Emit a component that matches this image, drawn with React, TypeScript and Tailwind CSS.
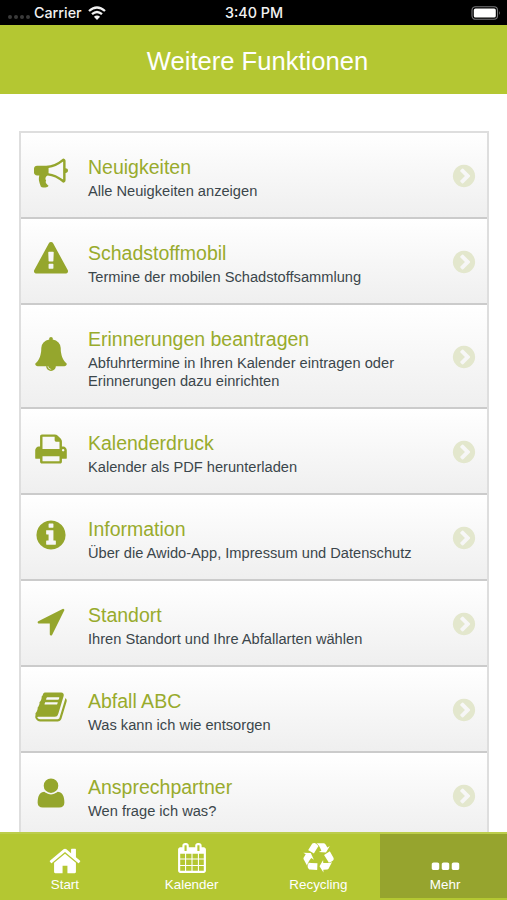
const CIRCLE =
  "M1664 896q0 209-103 385.5t-279.5 279.5-385.5 103-385.5-103-279.5-279.5-103-385.5 103-385.5 279.5-279.5 385.5-103 385.5 103 279.5 279.5 103 385.5z";

const icons = {
  bullhorn:
    "M1664 640q53 0 90.5 37.5t37.5 90.5-37.5 90.5-90.5 37.5v384q0 52-38 90t-90 38q-417-347-812-380-58 19-91 66t-31 100.5 40 92.5q-20 33-23 65.5t6 58 33.5 55 48 50 61.5 50.5q-29 58-111.5 83t-168.5 11.5-132-55.5q-7-23-29.5-87.5t-32-94.5-23-89-15-101 3.5-98.5 22-110.5h-122q-66 0-113-47t-47-113v-192q0-66 47-113t113-47h480q435 0 896-384 52 0 90 38t38 90v384zm-128 604v-954q-394 302-768 343v270q377 42 768 341z",
  warning:
    "M1024 1375v-190q0-14-9.5-23.5t-22.5-9.5h-192q-13 0-22.5 9.5t-9.5 23.5v190q0 14 9.5 23.5t22.5 9.5h192q13 0 22.5-9.5t9.5-23.5zm-2-374l18-459q0-12-10-19-13-11-24-11h-220q-11 0-24 11-10 7-10 21l17 457q0 10 10 16.5t24 6.5h185q14 0 23.5-6.5t10.5-16.5zm-14-934l768 1408q35 63-2 126-17 29-46.5 46t-63.5 17h-1536q-34 0-63.5-17t-46.5-46q-37-63-2-126l768-1408q17-31 47-49t65-18 65 18 47 49z",
  bell:
    "M912 1696q0-16-16-16-59 0-101.5-42.5t-42.5-101.5q0-16-16-16t-16 16q0 73 51.5 124.5t124.5 51.5q16 0 16-16zm816-288q0 52-38 90t-90 38h-448q0 106-75 181t-181 75-181-75-75-181h-448q-52 0-90-38t-38-90q50-42 91-88t85-119.5 74.5-158.5 50-206 19.5-260q0-152 117-282.5t307-158.5q-8-19-8-39 0-40 28-68t68-28 68 28 28 68q0 20-8 39 190 28 307 158.5t117 282.5q0 139 19.5 260t50 206 74.5 158.5 85 119.5 91 88z",
  print:
    "M448 1536h896v-256h-896v256zm0-640h896v-384h-160q-40 0-68-28t-28-68v-160h-640v640zm1152 64q0-26-19-45t-45-19-45 19-19 45 19 45 45 19 45-19 19-45zm128 0v416q0 13-9.5 22.5t-22.5 9.5h-224v160q0 40-28 68t-68 28h-960q-40 0-68-28t-28-68v-160h-224q-13 0-22.5-9.5t-9.5-22.5v-416q0-79 56.5-135.5t135.5-56.5h64v-544q0-40 28-68t68-28h672q40 0 88 20t76 48l152 152q28 28 48 76t20 88v256h64q79 0 135.5 56.5t56.5 135.5z",
  info:
    "M1152 1376v-160q0-14-9-23t-23-9h-96v-512q0-14-9-23t-23-9h-320q-14 0-23 9t-9 23v160q0 14 9 23t23 9h96v320h-96q-14 0-23 9t-9 23v160q0 14 9 23t23 9h448q14 0 23-9t9-23zm-128-896v-160q0-14-9-23t-23-9h-192q-14 0-23 9t-9 23v160q0 14 9 23t23 9h192q14 0 23-9t9-23z" +
    CIRCLE,
  arrow:
    "M1593 349l-640 1280q-17 35-57 35-5 0-15-2-22-5-35.5-22.5t-13.5-39.5v-576h-576q-22 0-39.5-13.5t-22.5-35.5 4-42 29-30l1280-640q13-7 29-7 27 0 45 19 15 14 18.5 34.5t-6.5 39.5z",
  book:
    "M1703 478q40 57 18 129l-275 906q-19 64-76.5 107.5t-122.5 43.5h-923q-77 0-148.5-53.5t-99.5-131.5q-24-67-2-127 0-4 3-27t4-37q1-8-3-21.5t-3-19.5q2-11 8-21t16.5-23.5 16.5-23.5q23-38 45-91.5t30-91.5q3-10 .5-30t-.5-28q3-11 17-28t17-23q21-36 42-92t25-90q1-9-2.5-32t.5-28q4-13 22-30.5t22-22.5q19-26 42.5-84.5t27.5-96.5q1-8-3-25.5t-2-26.5q2-8 9-18t18-23 17-21q8-12 16.5-30.5t15-35 16-36 19.5-32 26.5-23.5 36-11.5 47.5 5.5l-1 3q38-9 51-9h761q74 0 114 56t18 130l-274 906q-36 119-71.5 153.5t-128.5 34.5h-869q-27 0-38 15-11 16-1 43 24 70 144 70h923q29 0 56-15.5t35-41.5l300-987q7-22 5-57 38 15 59 43zm-1064 2q-4 13 2 22.5t20 9.5h608q13 0 25.5-9.5t16.5-22.5l21-64q4-13-2-22.5t-20-9.5h-608q-13 0-25.5 9.5t-16.5 22.5zm-83 256q-4 13 2 22.5t20 9.5h608q13 0 25.5-9.5t16.5-22.5l21-64q4-13-2-22.5t-20-9.5h-608q-13 0-25.5 9.5t-16.5 22.5z",
  user:
    "M1600 1405q0 120-73 189.5t-194 69.5h-874q-121 0-194-69.5t-73-189.5q0-53 3.5-103.5t14-109 26.5-108.5 43-97.5 62-81 85.5-53.5 111.5-20q9 0 42 21.5t74.5 48 108 48 133.5 21.5 133.5-21.5 108-48 74.5-48 42-21.5q61 0 111.5 20t85.5 53.5 62 81 43 97.5 26.5 108.5 14 109 3.5 103.5zm-320-893q0 159-112.5 271.5t-271.5 112.5-271.5-112.5-112.5-271.5 112.5-271.5 271.5-112.5 271.5 112.5 112.5 271.5z",
  chevron:
    "M845 1395l454-454q19-19 19-45t-19-45l-454-454q-19-19-45-19t-45 19l-102 102q-19 19-19 45t19 45l307 307-307 307q-19 19-19 45t19 45l102 102q19 19 45 19t45-19z" +
    CIRCLE,
  home:
    "M1472 992v480q0 26-19 45t-45 19h-384v-384h-256v384h-384q-26 0-45-19t-19-45v-480q0-1 .5-3t.5-3l575-474 575 474q1 2 1 6zm223-69l-62 74q-8 9-21 11h-3q-13 0-21-7l-692-577-692 577q-12 8-24 7-13-2-21-11l-62-74q-8-10-7-23.5t11-21.5l719-599q32-26 76-26t76 26l244 204v-195q0-14 9-23t23-9h192q14 0 23 9t9 23v408l219 182q10 8 11 21.5t-7 23.5z",
  calendar:
    "M192 1664h288v-288h-288v288zm352 0h320v-288h-320v288zm-352-352h288v-320h-288v320zm352 0h320v-320h-320v320zm-352-384h288v-288h-288v288zm736 736h320v-288h-320v288zm-384-736h320v-288h-320v288zm768 736h288v-288h-288v288zm-384-352h320v-320h-320v320zm-352-864v-288q0-13-9.5-22.5t-22.5-9.5h-64q-13 0-22.5 9.5t-9.5 22.5v288q0 13 9.5 22.5t22.5 9.5h64q13 0 22.5-9.5t9.5-22.5zm736 864h288v-320h-288v320zm-384-384h320v-288h-320v288zm384 0h288v-288h-288v288zm32-480v-288q0-13-9.5-22.5t-22.5-9.5h-64q-13 0-22.5 9.5t-9.5 22.5v288q0 13 9.5 22.5t22.5 9.5h64q13 0 22.5-9.5t9.5-22.5zm384-64v1280q0 52-38 90t-90 38h-1408q-52 0-90-38t-38-90v-1280q0-52 38-90t90-38h128v-96q0-66 47-113t113-47h64q66 0 113 47t47 113v96h384v-96q0-66 47-113t113-47h64q66 0 113 47t47 113v96h128q52 0 90 38t38 90z",
  recycle:
    "M836 1169l-15 368-2 22-420-29q-36-3-67-31.5t-47-65.5q-11-27-14.5-55t4-65 12-55 21.5-64 19-53q78 12 509 28zm-387-586l180 379-147-92q-63 72-111.5 144.5t-72.5 125-39.5 94.5-18.5 63l-4 21-190-357q-17-26-18-56t6-47l8-18q35-63 114-188l-140-86zm1231 517l-188 359q-12 29-36.5 46.5t-43.5 20.5l-18 4q-71 7-219 12l8 164-230-367 211-362 7 173q170 16 283 5t170-33zm-785-924q-47 63-265 435l-317-187-19-12 225-356q20-31 60-45t80-10q24 2 48.5 12t42 21 41.5 33 36 34.5 36 39.5 32 35zm655 307l212 363q18 37 12.5 76t-27.5 74q-13 20-33 37t-38 28-48.5 22-47 16-51.5 14-46 12q-34-72-265-436l313-195zm-143-226l142-83-220 373-419-20 151-86q-34-89-75-166t-75.5-123.5-64.5-80-47-46.5l-17-13 405 1q31-3 58 10.5t39 28.5l11 15q39 61 112 190z",
  dots:
    "M576 736v192q0 40-28 68t-68 28h-192q-40 0-68-28t-28-68v-192q0-40 28-68t68-28h192q40 0 68 28t28 68zm512 0v192q0 40-28 68t-68 28h-192q-40 0-68-28t-28-68v-192q0-40 28-68t68-28h192q40 0 68 28t28 68zm512 0v192q0 40-28 68t-68 28h-192q-40 0-68-28t-28-68v-192q0-40 28-68t68-28h192q40 0 68 28t28 68z",
};

type IconName = keyof typeof icons;

function Icon({ name, className }: { name: IconName; className: string }) {
  return (
    <svg viewBox="0 0 1792 1792" fill="currentColor" className={`shrink-0 overflow-visible ${className}`}>
      <path d={icons[name]} fillRule={name === "info" || name === "chevron" ? "evenodd" : "nonzero"} />
    </svg>
  );
}

const entries: { icon: IconName; title: string; lines: string[] }[] = [
  { icon: "bullhorn", title: "Neuigkeiten", lines: ["Alle Neuigkeiten anzeigen"] },
  { icon: "warning", title: "Schadstoffmobil", lines: ["Termine der mobilen Schadstoffsammlung"] },
  {
    icon: "bell",
    title: "Erinnerungen beantragen",
    lines: ["Abfuhrtermine in Ihren Kalender eintragen oder", "Erinnerungen dazu einrichten"],
  },
  { icon: "print", title: "Kalenderdruck", lines: ["Kalender als PDF herunterladen"] },
  { icon: "info", title: "Information", lines: ["Über die Awido-App, Impressum und Datenschutz"] },
  { icon: "arrow", title: "Standort", lines: ["Ihren Standort und Ihre Abfallarten wählen"] },
  { icon: "book", title: "Abfall ABC", lines: ["Was kann ich wie entsorgen"] },
  { icon: "user", title: "Ansprechpartner", lines: ["Wen frage ich was?"] },
];

const tabs: { icon: IconName; label: string; size: string; active?: boolean }[] = [
  { icon: "home", label: "Start", size: "size-[34px] mb-[-4px]" },
  { icon: "calendar", label: "Kalender", size: "size-[30px] mb-px" },
  { icon: "recycle", label: "Recycling", size: "size-[31px]" },
  { icon: "dots", label: "Mehr", size: "size-[35px] mb-[-11px]", active: true },
];

function StatusBar() {
  return (
    <div className="grid h-[25px] shrink-0 grid-cols-3 items-center bg-black font-[Inter,sans-serif] text-[14.3px] font-medium text-[#f2f2f2]">
      <div className="flex items-center pl-2">
        <div className="flex gap-[2px] pt-[9px]">
          {[0, 1, 2, 3].map((i) => (
            <span key={i} className="size-[4px] rounded-full bg-[#3a3a3a]" />
          ))}
        </div>
        <span className="ml-[4px]">Carrier</span>
        <svg viewBox="0 0 18 14" className="ml-[6px] h-[14px] w-[18px]" fill="none" stroke="currentColor" strokeWidth="2.3">
          <path d="M1 5Q9-2 17 5" />
          <path d="M4 8.2Q9 3.8 14 8.2" />
          <path d="M9 14L5.9 10.8Q9 8.2 12.1 10.8Z" fill="currentColor" stroke="none" />
        </svg>
      </div>
      <span className="pl-px text-center">3:40 PM</span>
      <svg viewBox="0 0 30 14" className="mr-[6px] h-[14px] w-[30px] justify-self-end">
        <rect x="1" y="0.7" width="25.5" height="12.6" rx="3.5" fill="none" stroke="#77777a" strokeWidth="1.1" />
        <rect x="2.8" y="2.4" width="22" height="9.2" rx="1.7" fill="#fff" />
        <path d="M28 5q1.8 2 0 4z" fill="#77777a" />
      </svg>
    </div>
  );
}

export default function App() {
  return (
    <div className="flex h-[900px] w-[507px] flex-col overflow-hidden bg-white font-['Liberation_Sans',Arial,sans-serif]">
      <StatusBar />
      <header className="flex h-[69px] shrink-0 items-center justify-center bg-[#b4c732] pl-[8px] pt-[3px] text-[25.6px] text-white">
        Weitere Funktionen
      </header>

      <main className="min-h-0 flex-1 overflow-hidden pt-[37px] pr-[18px] pl-[19px]">
        <ul className="border-2 border-b-0 border-[#dedede]">
          {entries.map((entry) => (
            <li
              key={entry.title}
              className="flex items-center border-b-2 border-[#cbcbcb] bg-linear-to-b from-white to-[#efefef] pr-[10px] pl-[13px]"
            >
              <Icon name={entry.icon} className="mt-[-5px] size-[34px] text-[#95a62d]" />
              <div className="ml-[20px] flex-1 pt-[22px] pb-[17px] text-[14.65px] leading-[18px] whitespace-nowrap text-[#3b464b]">
                <h2 className="mb-[2px] text-[19.5px] leading-[25px] text-[#98ab2c]">{entry.title}</h2>
                {entry.lines.map((line) => (
                  <p key={line}>{line}</p>
                ))}
              </div>
              <Icon name="chevron" className="mt-px size-[26px] text-[#e3e7cd]" />
            </li>
          ))}
        </ul>
      </main>

      <nav className="grid h-[68px] shrink-0 grid-cols-4 border-t-2 border-[#bccd4c] bg-[#b4c732] text-white">
        {tabs.map((tab) => (
          <div
            key={tab.label}
            className={`flex flex-col items-center ${tab.active ? "mb-[2px] bg-[#96a42e]" : ""}`}
          >
            <div className="flex h-[40px] items-end justify-center pl-[3px]">
              <Icon name={tab.icon} className={tab.size} />
            </div>
            <span className="mt-[3px] pl-[3px] text-[13.4px] leading-[16px]">{tab.label}</span>
          </div>
        ))}
      </nav>
    </div>
  );
}
